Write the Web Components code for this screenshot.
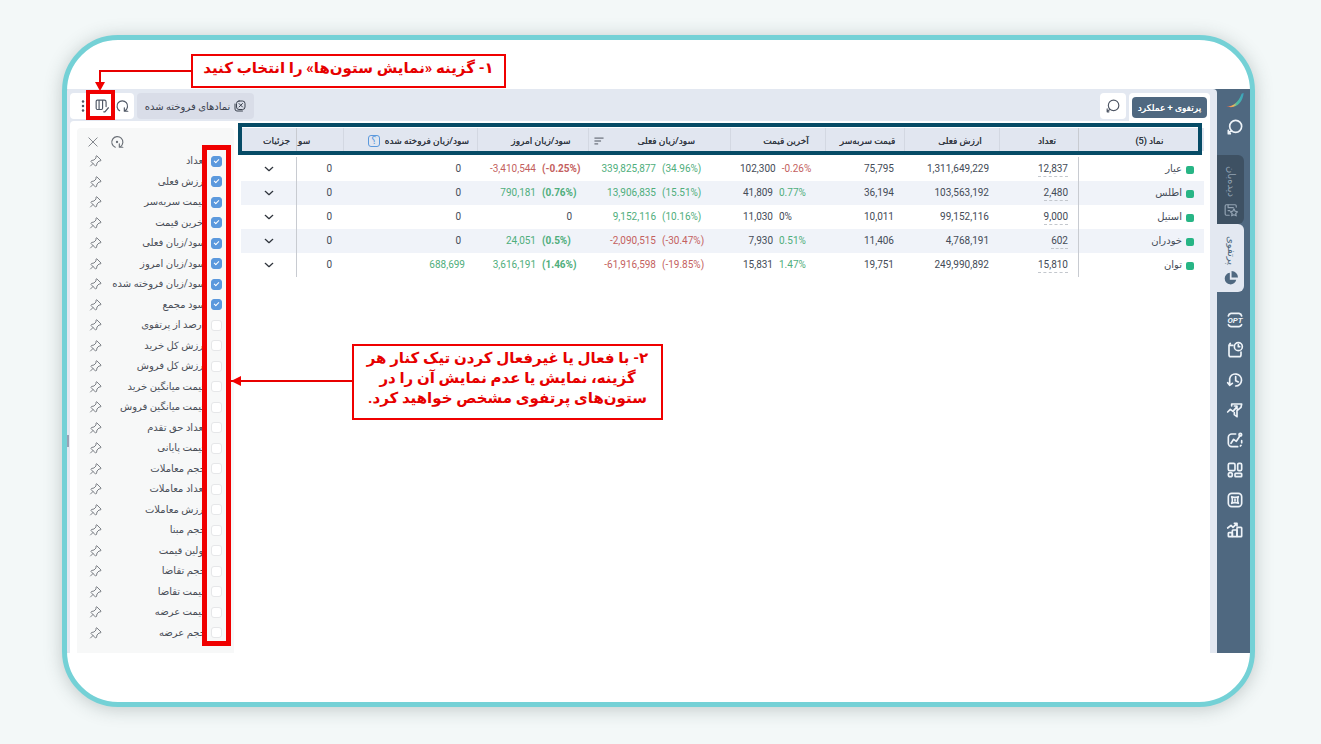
<!DOCTYPE html>
<html lang="fa" dir="rtl">
<head>
<meta charset="utf-8">
<title>پرتفوی</title>
<style>
  html { background: #f3f8f8; }
  body { margin: 0; padding: 35px 66px 37px 62px; font-family: Roboto, "DejaVu Sans", sans-serif; font-size: 10px; color: #444b57; }
  @media (max-width: 900px) { body { padding: 16px; } }
</style>
</head>
<body>
<help-frame>
  <portfolio-app></portfolio-app>
  <step-note slot="notes" class="one">۱- گزینه «نمایش ستون‌ها» را انتخاب کنید</step-note>
  <step-note slot="notes" class="two">۲- با فعال یا غیرفعال کردن تیک کنار هر<br>گزینه، نمایش یا عدم نمایش آن را در<br>ستون‌های پرتفوی مشخص خواهید کرد.</step-note>
</help-frame>

<script>
const define = (name, markup, setup) => customElements.define(name, class extends HTMLElement {
  constructor() {
    super();
    const root = this.attachShadow({ mode: 'open' });
    const tpl = document.createElement('template');
    tpl.innerHTML = markup;
    root.append(tpl.content.cloneNode(true));
  }
  connectedCallback() { if (setup) setup(this, this.shadowRoot); }
});

const icons = {
  search: '<circle cx="13" cy="11" r="9"/><path d="M7 18l-4 2M2 17v5h3"/>',
  logo: '<defs><linearGradient id="g"><stop offset="0" stop-color="#e9564c"/><stop offset=".4" stop-color="#f3b95a"/><stop offset=".6" stop-color="#4fc0a0"/><stop offset="1" stop-color="#3a9fc0"/></linearGradient></defs><path stroke="none" fill="url(#g)" d="M-1 20C10 20 17 14 22 1l3-1C24 14 13 25-1 20z"/>',
  watch: '<path d="M21 7V5a2 2 0 0 0-2-2H4a2 2 0 0 0-2 2v14a2 2 0 0 0 2 2h5"/><path d="M7 3v4M7 8h9M7 13h3"/><path d="M17 10l2 4 4 1-3 3 1 4-4-2-4 2 1-4-3-3 4-1z"/>',
  pie: '<g fill="currentColor" stroke="none"><path d="M10 3a10 10 0 1 0 11 12H10z"/><path d="M13 0v11h11A11 11 0 0 0 13 0z"/></g>',
  opt: '<path d="M2 6a5 5 0 0 1 4-4h12a5 5 0 0 1 4 4M2 19a5 5 0 0 0 4 3h12a5 5 0 0 0 4-3"/><text x="12" y="17" direction="ltr" text-anchor="middle" font-family="Roboto" font-size="12" font-weight="700" font-style="italic" fill="currentColor" stroke="none">OPT</text>',
  later: '<path d="M9 5H3l2-3M3 5v14a3 3 0 0 0 3 3h12a3 3 0 0 0 3-3v-4"/><circle cx="17" cy="7" r="6"/><path d="M17 4v3h2"/>',
  history: '<path d="M4 18V10a9 9 0 1 1 9 11M1 16l3 4 4-3"/><path d="M13 7v6l4 2"/>',
  filter: '<path d="M7 6V3h15l-1 5-6 5v9l-4-3v-3M1 15l4-4 4 3 6-7M11 6h4v4"/>',
  chart: '<path d="M13 3H7a5 5 0 0 0-5 5v9a5 5 0 0 0 5 5h9"/><path d="M6 17l4-6 4 3 6-9"/><circle cx="20" cy="4" r="2"/><path d="M20 21l1-1M22 16v-3"/>',
  grid: '<rect x="2" y="2" width="10" height="11" rx="2"/><rect x="16" y="2" width="6" height="11" rx="2"/><circle cx="5" cy="19" r="3"/><rect x="12" y="17" width="10" height="5" rx="1"/>',
  target: '<rect x="2" y="2" width="20" height="20" rx="5"/><path d="M7 7l3 1h4l3-1-1 3v4l1 3-3-1h-4l-3 1 1-3v-4zM12 11v2"/>',
  bars: '<rect x="2" y="16" width="6" height="6" rx="1"/><rect x="8" y="12" width="7" height="10" rx="1"/><rect x="15" y="8" width="7" height="14" rx="1"/><path d="M1 9l5-4 3 3 6-6M11 2h4v4"/>',
  sold: '<path d="M2 8v10a4 4 0 0 0 4 4h11"/><rect x="5" y="2" width="17" height="17" rx="5"/><path d="M10 7l7 7M17 7l-7 7"/>',
  refresh: '<path d="M8 20a9 9 0 1 1 9 0M16 15v6h6"/>',
  reset: '<path d="M9 21a9.500 9.500 0 1 1 9-1M16 15v6h6"/><circle cx="12" cy="12" r="1" fill="currentColor"/>',
  columns: '<path d="M19 13V5a3 3 0 0 0-3-3H4a2 2 0 0 0-2 2v12a2 2 0 0 0 2 2h7a2 2 0 0 0 2-2V2M7 2v16"/><path d="M23 15l-6 7h-2"/>',
  dots: '<g fill="currentColor" stroke="none"><circle cx="12" cy="3" r="2.500"/><circle cx="12" cy="12" r="2.500"/><circle cx="12" cy="21" r="2.500"/></g>',
  close: '<path d="M2 2l20 20M22 2L2 22"/>',
  pin: '<path d="M14 2l8 8-1 2h-3l-4 4-1 5-2 1L2 13l1-2 5-1 4-4V3zM6 17l-5 5"/>',
  down: '<path d="M3 8l9 8 9-8"/>',
  sort: '<path d="M2 5h20M2 12h14M2 19h7"/>'
};
customElements.define('ui-icon', class extends HTMLElement {
  connectedCallback() {
    if (this.shadowRoot) return;
    this.attachShadow({ mode: 'open' }).innerHTML = `<style>
      :host { display: block; flex: none; width: 16px; height: 16px; }
      :host([size="s"]) { width: 12px; height: 12px; }
      :host([size="m"]) { width: 14px; height: 14px; }
      :host([size="xs"]) { width: 10px; height: 10px; }
      svg { display: block; width: 100%; height: 100%; overflow: visible; fill: none; stroke: currentColor; stroke-width: var(--stroke, 2); stroke-linecap: round; stroke-linejoin: round; }
    </style><svg viewBox="0 0 24 24" aria-hidden="true">${icons[this.getAttribute('name')]}</svg>`;
  }
});

define('step-note', `<style>
  :host { display: block; box-sizing: border-box; border: 2px solid #f00000; background: #fff; color: #e60000; font-size: 15px; font-weight: 700; line-height: 20px; text-align: center; white-space: nowrap; }
</style><slot></slot>`);

define('help-frame', `<style>
  :host { display: block; position: relative; box-sizing: border-box; border: 5px solid #74d1d6; border-radius: 56px; padding: 49px 0; background: #fff; box-shadow: 0 2px 18px rgba(40, 60, 60, .25); overflow: hidden; }
  ::slotted(step-note) { position: absolute; }
  ::slotted(.one) { left: 124px; top: 14px; width: 315px; height: 34px; padding-top: 2px; }
  ::slotted(.two) { left: 285px; top: 304px; width: 311px; height: 76px; padding-top: 2px; }
  svg { position: absolute; left: 0; top: 0; overflow: visible; fill: #f00000; stroke: none; }
  path.line { fill: none; stroke: #e80000; stroke-width: 2; }
  .mark { position: absolute; left: 19px; top: 50px; width: 29px; height: 30px; box-sizing: border-box; border: 4px solid #f00000; }
</style>
<slot></slot>
<div class="mark"></div>
<svg width="300" height="360" aria-hidden="true">
  <path class="line" d="M125 31H33V44M164 341H285"/><path d="M28 42h10l-5 9zM164 341l10-5v10z"/>
</svg>
<slot name="notes"></slot>`);

define('side-tab', `<style>
  :host { display: block; }
  button { display: flex; width: 27px; height: 69px; box-sizing: border-box; flex-direction: column; align-items: center; justify-content: flex-end; gap: 6px; border: 0; border-radius: 0 6px 6px 0; margin: 0; padding: 0 0 7px; background: #3e5163; color: #93a3b3; font: inherit; font-size: 10px; line-height: 14px; }
  span { writing-mode: vertical-rl; direction: rtl; white-space: nowrap; }
  :host([active]) button { background: #e3e8f1; color: #4f6880; height: 68px; }
</style><button type="button"><span><slot></slot></span><ui-icon size="m"></ui-icon></button>`);
define('app-sidebar', `<style>
  :host { display: flex; flex: none; width: 33px; flex-direction: column; background: #4f6880; color: #eef3f8; --stroke: 2.500; }
  .top { display: flex; height: 66px; flex-direction: column; align-items: center; gap: 10px; padding-top: 4px; box-sizing: border-box; margin-right: -2px; }
  tab-list { margin-right: 6px; --stroke: 2; }
  nav { display: flex; flex-direction: column; align-items: center; gap: 14px; margin-top: 20px; margin-right: -2px; }
  button { display: block; border: 0; padding: 0; margin: 0; background: none; color: inherit; }
</style>
<div class="top"><ui-icon name="logo"></ui-icon><button type="button" aria-label="جستجو"><ui-icon name="search"></ui-icon></button></div>
<tab-list></tab-list>
<nav></nav>`, (host, root) => {
  root.querySelector('nav').innerHTML = ['opt', 'later', 'history', 'filter', 'chart', 'grid', 'target', 'bars']
    .map(n => `<button type="button" aria-label="${n}"><ui-icon name="${n}"></ui-icon></button>`).join('');
});
define('tab-list', `<style>:host { display: block; }</style>
<side-tab icon="watch">دیده‌بان</side-tab><side-tab icon="pie" active>پرتفوی</side-tab>`, (host, root) => {
  root.querySelectorAll('side-tab').forEach(t => {
    const i = document.createElement('ui-icon');
    i.setAttribute('name', t.getAttribute('icon'));
    i.setAttribute('size', 'm');
    t.shadowRoot.querySelector('ui-icon').replaceWith(i);
  });
});

define('portfolio-toolbar', `<style>
  :host { display: flex; height: 32px; box-sizing: border-box; padding: 4px 7px 0 3px; align-items: flex-start; gap: 3px; color: #505866; --stroke: 2; }
  button { display: flex; align-items: center; justify-content: center; gap: 4px; border: 0; margin: 0; padding: 0; background: none; color: inherit; font: inherit; white-space: nowrap; }
  .wrap { background: #fff; border-radius: 4px 4px 0 0; padding: 4px 3px 3px; }
  .primary { width: 75px; height: 21px; border-radius: 4px; background: #4f6880; color: #fff; font-size: 9px; text-shadow: 0 0 0 #fff; }
  .search { width: 26px; height: 26px; border-radius: 4px; background: #fff; }
  .sold { width: 117px; height: 26px; margin-right: auto; border-radius: 4px; background: #d9dde8; color: #3b424f; font-size: 10px; }
  .group { display: flex; width: 64px; height: 26px; align-items: center; gap: 6px; box-sizing: border-box; padding-right: 5px; border-radius: 4px; background: #fff; }
</style>
<div class="wrap"><button type="button" class="primary">پرتفوی + عملکرد</button></div>
<button type="button" class="search" aria-label="جستجو"><ui-icon name="search" size="m"></ui-icon></button>
<button type="button" class="sold"><ui-icon name="sold" size="s"></ui-icon>نمادهای فروخته شده</button>
<div class="group">
  <button type="button" aria-label="بازخوانی"><ui-icon name="refresh" size="m"></ui-icon></button>
  <button type="button" aria-label="نمایش ستون‌ها"><ui-icon name="columns" size="m"></ui-icon></button>
  <button type="button" aria-label="بیشتر"><ui-icon name="dots" size="s"></ui-icon></button>
</div>`);

const rows = [
  ['عیار', '12,837', '1,311,649,229', '75,795', ['102,300', '-0.26%'], ['339,825,877', '(34.96%)'], ['-3,410,544', '(-0.25%)'], '0'],
  ['اطلس', '2,480', '103,563,192', '36,194', ['41,809', '0.77%'], ['13,906,835', '(15.51%)'], ['790,181', '(0.76%)'], '0'],
  ['استیل', '9,000', '99,152,116', '10,011', ['11,030', '0%'], ['9,152,116', '(10.16%)'], ['0', ''], '0'],
  ['خودران', '602', '4,768,191', '11,406', ['7,930', '0.51%'], ['-2,090,515', '(-30.47%)'], ['24,051', '(0.5%)'], '0'],
  ['توان', '15,810', '249,990,892', '19,751', ['15,831', '1.47%'], ['-61,916,598', '(-19.85%)'], ['3,616,191', '(1.46%)'], '688,699']
];
define('portfolio-table', `<style>
  :host { display: block; position: relative; flex: 1; min-width: 0; }
  table { width: 100%; table-layout: fixed; border-collapse: separate; border-spacing: 0; font-size: 10px; line-height: 14px; }
  th { height: 23px; box-sizing: border-box; padding: 2px 0 0 16px; background: #e1e6f0; color: #343a45; text-shadow: 0 0 0 #343a45; font-weight: 400; font-size: 9px; white-space: nowrap; border-left: 1px solid #d3d8e2; }
  th.fix, td.fix { border-left: 1px solid #c8cbd1; }
  th.last { border-left: 0; }
  th.cut { padding: 2px 0 0 1px; text-align: left; }
  .tools { display: flex; align-items: center; justify-content: center; gap: 5px; }
  .sorted { display: flex; align-items: center; justify-content: space-between; padding-right: 35px; }
  th.edge { padding-left: 5px; }
  th.sold { padding-left: 16px; }
  .help { width: 12px; height: 12px; flex: none; box-sizing: border-box; border: 1px solid #5b99dd; border-radius: 3px; color: #5b99dd; font-size: 10px; line-height: 10px; text-shadow: none; }
  tbody::before { content: ""; display: block; height: 6px; }
  td { height: 24px; box-sizing: border-box; padding: 0 10px; white-space: nowrap; direction: ltr; text-align: right; }
  tbody tr:nth-child(even) td { background: #f0f3f9; }
  td.name { direction: rtl; }
  .name span { display: flex; align-items: center; gap: 4px; }
  .name i { width: 8px; height: 8px; border-radius: 2px; background: #27b585; margin-top: 2px; }
  .qty span { display: inline-block; border-bottom: 1px dashed #c3c7cd; }
  .pair { display: flex; justify-content: flex-end; gap: 6px; }
  .pair span + span { text-align: left; width: 36px; }
  .wide span + span { width: 58px; }
  .today span + span { font-weight: 700; }
  .up { color: #4fae7c; }
  .down { color: #c45f60; }
  td.open { padding: 0; }
  td.open button { display: block; margin: 0 auto; padding: 0; border: 0; background: none; color: #30353d; --stroke: 3; }
  .outline { position: absolute; left: -3px; right: 2px; top: -5px; height: 32px; box-sizing: border-box; border: 4px solid #064b66; }
</style>
<table>
  <colgroup><col style="width:126px"><col style="width:79px"><col style="width:95px"><col style="width:79px"><col style="width:95px"><col style="width:142px"><col style="width:111px"><col style="width:134px"><col style="width:47px"><col style="width:55px"></colgroup>
  <thead><tr>
    <th class="fix">نماد (5)</th><th>تعداد</th><th>ارزش فعلی</th><th class="edge">قیمت سربه‌سر</th><th>آخرین قیمت</th>
    <th class="edge"><div class="sorted">سود/زیان فعلی<ui-icon name="sort" size="xs"></ui-icon></div></th>
    <th>سود/زیان امروز</th><th class="sold"><div class="tools">سود/زیان فروخته شده<span class="help">؟</span></div></th><th class="cut fix">سو</th><th class="last">جزئیات</th>
  </tr></thead>
  <tbody></tbody>
</table>
<div class="outline"></div>`, (host, root) => {
  const tone = v => v.includes('-') ? 'down' : /[1-9]/.test(v) ? 'up' : '';
  root.querySelector('tbody').innerHTML = rows.map(([name, qty, value, even, price, now, today, sold]) => `<tr>
    <td class="name fix"><span><i></i>${name}</span></td><td class="qty"><span>${qty}</span></td><td>${value}</td><td>${even}</td>
    <td><div class="pair"><span>${price[0]}</span><span class="${tone(price[1])}">${price[1]}</span></div></td>
    <td><div class="pair wide ${tone(now[1])}"><span>${now[0]}</span><span>${now[1]}</span></div></td>
    <td>${today[1] ? `<div class="pair today ${tone(today[1])}"><span>${today[0]}</span><span>${today[1]}</span></div>` : `<div style="padding-right:6px">${today[0]}</div>`}</td>
    <td class="${tone(sold)}" ><div style="padding-right:${sold === '0' ? 6 : 2}px">${sold}</div></td><td class="fix">0</td>
    <td class="open"><button type="button" aria-label="جزئیات ${name}"><ui-icon name="down" size="xs"></ui-icon></button></td></tr>`).join('');
});

const columns = ['تعداد', 'ارزش فعلی', 'قیمت سربه‌سر', 'آخرین قیمت', 'سود/زیان فعلی', 'سود/زیان امروز', 'سود/زیان فروخته شده', 'سود مجمع', 'درصد از پرتفوی', 'ارزش کل خرید', 'ارزش کل فروش', 'قیمت میانگین خرید', 'قیمت میانگین فروش', 'تعداد حق تقدم', 'قیمت پایانی', 'حجم معاملات', 'تعداد معاملات', 'ارزش معاملات', 'حجم مبنا', 'اولین قیمت', 'حجم تقاضا', 'قیمت تقاضا', 'قیمت عرضه', 'حجم عرضه'];
define('column-picker', `<style>
  :host { display: flex; position: relative; flex: none; width: 157px; box-sizing: border-box; flex-direction: column; padding-bottom: 10px; background: #f7f8f8; border-radius: 4px 4px 0 0; color: #4a4f58; --stroke: 2; }
  header { display: flex; height: 23px; box-sizing: border-box; align-items: center; justify-content: flex-end; gap: 12px; padding: 5px 0 0 11px; }
  button { display: block; border: 0; padding: 0; margin: 0; background: none; color: #6c7178; }
  ul { display: flex; flex: 1; flex-direction: column; margin: 0; padding: 0 12px 0 13px; list-style: none; }
  li { display: flex; flex: 1; align-items: center; }
  li button { color: #7d8187; }
  label { flex: 1; padding-right: 5px; font-size: 10px; line-height: 16px; white-space: nowrap; }
  input { appearance: none; display: block; position: relative; width: 11px; height: 11px; margin: 0; box-sizing: border-box; border: 1px solid #e6e7e9; border-radius: 3px; background: #fff; }
  input:checked { border-color: #5b99dd; background: #5b99dd; }
  input:checked::after { content: ""; position: absolute; left: 2px; top: 2px; width: 4px; height: 2px; border: solid #fff; border-width: 0 0 1px 1px; transform: rotate(-45deg); }
  .outline { position: absolute; right: 3px; top: 17px; bottom: 7px; width: 29px; box-sizing: border-box; border: 5px solid #f00000; pointer-events: none; }
</style>
<header><button type="button" aria-label="بازنشانی"><ui-icon name="reset" size="m"></ui-icon></button><button type="button" aria-label="بستن"><ui-icon name="close" size="xs"></ui-icon></button></header>
<ul></ul><div class="outline"></div>`, (host, root) => {
  root.querySelector('ul').innerHTML = columns.map((c, i) => `<li><input type="checkbox" id="c${i}"${i < 8 ? ' checked' : ''}><label for="c${i}">${c}</label><button type="button" aria-label="سنجاق ${c}"><ui-icon name="pin" size="s"></ui-icon></button></li>`).join('');
});

define('portfolio-app', `<style>
  :host { display: flex; min-height: 564px; background: #4f6880; }
  main { display: flex; flex: 1; min-width: 0; flex-direction: column; position: relative; background: #e3e8f1; border-radius: 0 4px 0 0; }
  .panel { display: flex; flex: 1; gap: 7px; margin: 0 7px 0 3px; padding: 7px 6px 0 7px; background: #fff; border-radius: 4px 0 0 0; }
  .grip { position: absolute; left: 0; top: 346px; width: 2px; height: 12px; background: #9aa1b5; }
</style>
<app-sidebar></app-sidebar>
<main>
  <portfolio-toolbar></portfolio-toolbar>
  <div class="panel"><portfolio-table></portfolio-table><column-picker></column-picker></div>
  <div class="grip"></div>
</main>`);
</script>
</body>
</html>
